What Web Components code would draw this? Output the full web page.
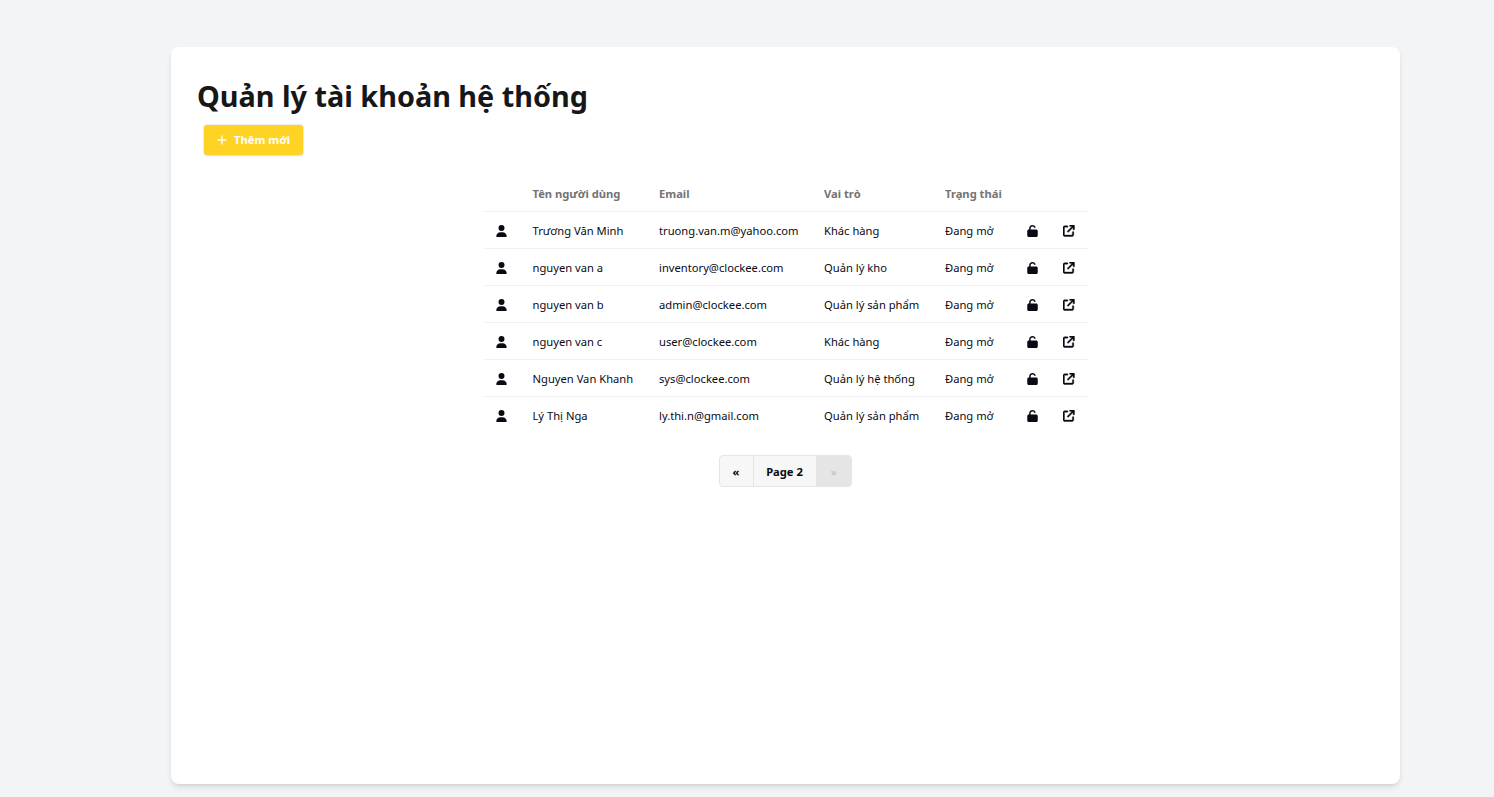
<!DOCTYPE html>
<html lang="vi">
<head>
<meta charset="utf-8">
<title>Quản lý tài khoản hệ thống</title>
<style>
  html, body { margin: 0; height: 100%; }
  body { background: #f3f4f6; font-family: "Noto Sans", sans-serif; color: #0a0a0a; }
</style>
</head>
<body>
<account-page>
  <add-button slot="action">Thêm mới</add-button>
  <account-table slot="table">
    <account-row name="Trương Văn Minh" email="truong.van.m@yahoo.com" role="Khác hàng" status="Đang mở"></account-row>
    <account-row name="nguyen van a" email="inventory@clockee.com" role="Quản lý kho" status="Đang mở"></account-row>
    <account-row name="nguyen van b" email="admin@clockee.com" role="Quản lý sản phẩm" status="Đang mở"></account-row>
    <account-row name="nguyen van c" email="user@clockee.com" role="Khác hàng" status="Đang mở"></account-row>
    <account-row name="Nguyen Van Khanh" email="sys@clockee.com" role="Quản lý hệ thống" status="Đang mở"></account-row>
    <account-row name="Lý Thị Nga" email="ly.thi.n@gmail.com" role="Quản lý sản phẩm" status="Đang mở"></account-row>
  </account-table>
  <page-nav slot="nav" page="2"></page-nav>
</account-page>

<script>
// Columnas de la tabla, compartidas por cabecera y filas
const COLUMNS = '49px 126.5px 165px 121px 82px 36px 24.5px';

// Contenedor blanco con el titulo
class AccountPage extends HTMLElement {
  constructor() {
    super();
    this.attachShadow({ mode: 'open' });
    this.shadowRoot.innerHTML = `
      <style>
        :host { display: block; padding: 47px 94px 13px 171px; box-sizing: border-box; height: 797px; }
        .card { background: #fff; border-radius: 8px; height: 737px; box-sizing: border-box; padding: 24px 26px;
                box-shadow: 0 4px 6px -1px rgba(0,0,0,.1), 0 2px 4px -2px rgba(0,0,0,.1); }
        h1 { margin: 0; font-size: 28.8px; line-height: 50px; font-weight: 700; color: #171717; }
        .action { padding-left: 7px; margin-top: 4px; height: 31px; }
        .center { display: flex; flex-direction: column; align-items: center; margin-top: 20px; }
        .nav { margin-top: 21px; padding-right: 1px; }
      </style>
      <div class="card">
        <h1>Quản lý tài khoản hệ thống</h1>
        <div class="action"><slot name="action"></slot></div>
        <div class="center">
          <slot name="table"></slot>
          <div class="nav"><slot name="nav"></slot></div>
        </div>
      </div>`;
  }
}

// Boton amarillo
class AddButton extends HTMLElement {
  constructor() {
    super();
    this.attachShadow({ mode: 'open' });
    this.shadowRoot.innerHTML = `
      <style>
        :host { display: inline-flex; align-items: center; gap: 7px; height: 30px; box-sizing: border-box; width: 99px;
                padding-left: 13px; padding-bottom: 1px; background: #ffd323; color: #fff; font-size: 11.2px; font-weight: 700;
                border-radius: 3px; box-shadow: 0 0 0 1px rgba(0,0,0,.06), 0 1px 2px rgba(0,0,0,.08); }
        svg { width: 10px; height: 10px; flex: none; }
      </style>
      <svg viewBox="0 0 10 10" fill="none" stroke="#fff" stroke-width="1.3"><path d="M5 .5v9M.5 5h9"/></svg>
      <slot></slot>`;
  }
}

// Tabla con su cabecera
class AccountTable extends HTMLElement {
  constructor() {
    super();
    this.attachShadow({ mode: 'open' });
    this.shadowRoot.innerHTML = `
      <style>
        :host { display: block; width: 604px; font-size: 11.2px; }
        .head { display: grid; grid-template-columns: ${COLUMNS}; align-items: center;
                border-bottom: 1px solid #f0f0f0; height: 35px; color: #737373; font-weight: 700; }
      </style>
      <div class="head">
        <span></span><span>Tên người dùng</span><span>Email</span><span>Vai trò</span><span>Trạng thái</span>
      </div>
      <slot></slot>`;
  }
}

// Una fila de la tabla
class AccountRow extends HTMLElement {
  constructor() {
    super();
    this.attachShadow({ mode: 'open' });
    this.shadowRoot.innerHTML = `
      <style>
        :host { display: grid; grid-template-columns: ${COLUMNS}; align-items: center; height: 37px; box-sizing: border-box;
                border-bottom: 1px solid #f0f0f0; color: #0a0a14; }
        :host(:last-child) { border-bottom-color: transparent; }
        .icon { display: flex; padding-top: 2px; }
        .user { padding-left: 12.5px; }
        svg { display: block; }
      </style>
      <span class="icon user"><svg width="11" height="12" viewBox="0 0 448 512" fill="#0a0a14"><path d="M224 256a128 128 0 1 0 0-256 128 128 0 1 0 0 256zm-45.7 48C79.8 304 0 383.8 0 482.3 0 498.7 13.3 512 29.7 512h388.6c16.4 0 29.7-13.3 29.7-29.7C448 383.8 368.2 304 269.7 304h-91.4z"/></svg></span>
      <span class="name"></span><span class="email"></span><span class="role"></span><span class="status"></span>
      <span class="icon"><svg width="11" height="12" viewBox="0 0 448 512" fill="#0a0a14"><path d="M144 144c0-44.2 35.8-80 80-80 31.9 0 59.4 18.6 72.3 45.7 7.6 16 26.7 22.8 42.6 15.2s22.8-26.7 15.2-42.6C331 33.7 281.5 0 224 0 144.5 0 80 64.5 80 144v48H64c-35.3 0-64 28.7-64 64v192c0 35.3 28.7 64 64 64h320c35.3 0 64-28.7 64-64V256c0-35.3-28.7-64-64-64H144v-48z"/></svg></span>
      <span class="icon"><svg width="11.5" height="11.5" viewBox="0 0 512 512" fill="#0a0a14" stroke="#0a0a14" stroke-width="18"><path d="M320 0c-17.7 0-32 14.3-32 32s14.3 32 32 32h82.7L201.4 265.4c-12.5 12.5-12.5 32.8 0 45.3s32.8 12.5 45.3 0L448 109.3V192c0 17.7 14.3 32 32 32s32-14.3 32-32V32c0-17.7-14.3-32-32-32H320zM80 32C35.8 32 0 67.8 0 112v320c0 44.2 35.8 80 80 80h320c44.2 0 80-35.8 80-80V320c0-17.7-14.3-32-32-32s-32 14.3-32 32v112c0 8.8-7.2 16-16 16H80c-8.8 0-16-7.2-16-16V112c0-8.8 7.2-16 16-16h112c17.7 0 32-14.3 32-32s-14.3-32-32-32H80z"/></svg></span>`;
    for (const key of ['name', 'email', 'role', 'status']) {
      this.shadowRoot.querySelector('.' + key).textContent = this.getAttribute(key);
    }
  }
}

// Paginacion
class PageNav extends HTMLElement {
  constructor() {
    super();
    this.attachShadow({ mode: 'open' });
    this.shadowRoot.innerHTML = `
      <style>
        :host { display: inline-flex; height: 32px; font-size: 11.2px; font-weight: 700; color: #0a0a14;
                border-radius: 4px; overflow: hidden; box-sizing: border-box; background: #f7f7f7; border: 1px solid #e5e5e5; }
        span { display: flex; align-items: center; justify-content: center; }
        .prev { width: 33px; border-right: 1px solid #e5e5e5; }
        .page { width: 62px; }
        .next { width: 34px; padding-left: 1px; background: #e5e5e5; color: #bdbdbd; font-weight: 400; }
      </style>
      <span class="prev">«</span><span class="page">Page ${this.getAttribute('page')}</span><span class="next">»</span>`;
  }
}

customElements.define('account-page', AccountPage);
customElements.define('add-button', AddButton);
customElements.define('account-table', AccountTable);
customElements.define('account-row', AccountRow);
customElements.define('page-nav', PageNav);
</script>
</body>
</html>
